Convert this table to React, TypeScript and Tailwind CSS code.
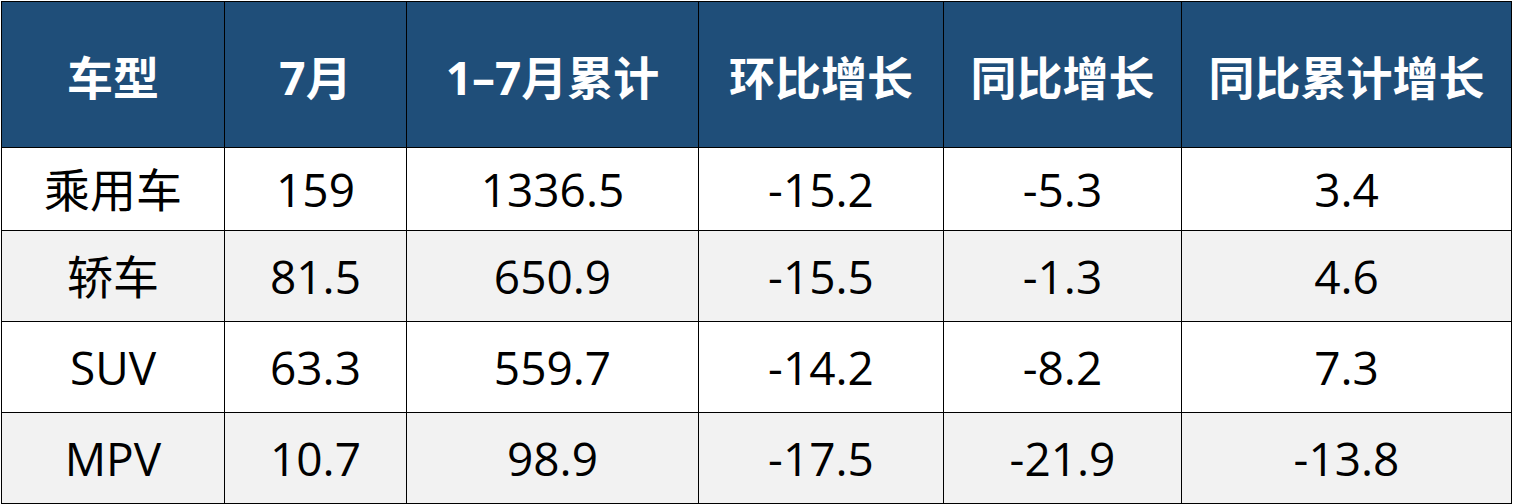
import React from "react";

const header = ["车型", "7月", "1–7月累计", "环比增长", "同比增长", "同比累计增长"];

const rows = [
    ["乘用车", "159", "1336.5", "-15.2", "-5.3", "3.4"],
    ["轿车", "81.5", "650.9", "-15.5", "-1.3", "4.6"],
    ["SUV", "63.3", "559.7", "-14.2", "-8.2", "7.3"],
    ["MPV", "10.7", "98.9", "-17.5", "-21.9", "-13.8"],
];

// latin glyphs in Open Sans (close to Segoe), CJK falls through to Noto
const font = { fontFamily: '"Open Sans", "Noto Sans CJK SC", "Noto Sans", sans-serif' };

export default function App() {
    return (
        <div className="bg-white w-[1514px] h-[504px] pt-[1px] pl-[1px]" style={font}>
            <table className="table-fixed border-collapse w-[1510px] text-[46px] leading-none">
                <colgroup>
                    <col className="w-[223px]" />
                    <col className="w-[182px]" />
                    <col className="w-[292px]" />
                    <col className="w-[245px]" />
                    <col className="w-[238px]" />
                    <col className="w-[330px]" />
                </colgroup>
                <thead>
                    <tr className="h-[146px] bg-[#1f4e79] text-white">
                        {header.map((h) => (
                            <th key={h} className="border border-black font-bold text-center align-middle p-0 pt-[4px]">
                                {h}
                            </th>
                        ))}
                    </tr>
                </thead>
                <tbody>
                    {rows.map((r, i) => (
                        <tr key={r[0]} className={`${i === 0 ? "h-[83px]" : "h-[91px]"} ${i % 2 === 1 ? "bg-[#f2f2f2]" : "bg-white"} text-black`}>
                            {r.map((c, j) => (
                                <td key={j} className="border border-black text-center align-middle p-0">
                                    {c}
                                </td>
                            ))}
                        </tr>
                    ))}
                </tbody>
            </table>
        </div>
    );
}
